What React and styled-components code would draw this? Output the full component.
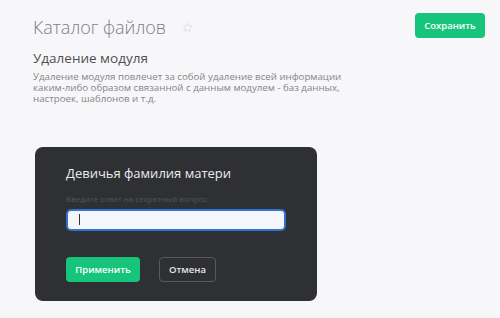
import React from "react";
import styled, { createGlobalStyle } from "styled-components";

const Global = createGlobalStyle`
  html, body { margin: 0; padding: 0; background: #f7f7f9; }
  body { font-family: "Open Sans", "Noto Sans", sans-serif; }
  * { box-sizing: border-box; }
`;

const Page = styled.div`
  width: 500px;
  height: 318px;
  padding: 13px 15px 0 33px;
  display: flex;
  flex-direction: column;
`;

const Header = styled.div`
  display: flex;
  align-items: flex-start;
  justify-content: space-between;
`;

const TitleRow = styled.div`
  display: flex;
  align-items: center;
  gap: 16px;
  padding-top: 2px;
`;

const Title = styled.h1`
  margin: 0;
  font-weight: 300;
  font-size: 18px;
  line-height: 24px;
  color: #7d7d80;
`;

const Star = styled.svg`
  width: 11px;
  height: 11px;
  margin-top: 1px;
`;

const Button = styled.button`
  height: 25px;
  border-radius: 4px;
  font-family: "Open Sans", sans-serif;
  font-size: 9.5px;
  font-weight: 600;
  cursor: pointer;
  padding: 0;
  background: ${p => (p.$variant === "ghost" ? "transparent" : "#16c47c")};
  color: ${p => (p.$variant === "ghost" ? "#e6e6e6" : "#ffffff")};
  border: ${p => (p.$variant === "ghost" ? "1px solid #595a5e" : "none")};
  width: ${p => p.$w}px;
`;

const SubTitle = styled.h2`
  margin: 10px 0 0;
  font-weight: 400;
  font-size: 13.5px;
  line-height: 18px;
  color: #4f4f52;
`;

const Text = styled.p`
  margin: 4px 0 0;
  width: 320px;
  font-size: 9.7px;
  line-height: 11.2px;
  color: #85858a;
`;

const Dialog = styled.div`
  margin: 42px 0 0 2px;
  width: 282px;
  height: 154px;
  background: #2f3034;
  border-radius: 8px;
  padding: 16px 31px 0 31px;
  display: flex;
  flex-direction: column;
`;

const DialogTitle = styled.h3`
  margin: 0;
  font-weight: 400;
  font-size: 13px;
  line-height: 20px;
  color: #ececee;
`;

const Hint = styled.div`
  margin-top: 11px;
  font-size: 8px;
  line-height: 10px;
  color: #525357;
`;

const Input = styled.div`
  margin-top: 5px;
  height: 22px;
  border: 2px solid #2f72cf;
  border-radius: 5px;
  background: #f5f6f9;
  display: flex;
  align-items: center;
  padding-left: 11px;
`;

const Caret = styled.span`
  width: 1px;
  height: 11px;
  background: #333;
`;

const Actions = styled.div`
  margin-top: 26px;
  display: flex;
  gap: 19px;
`;

export default function App() {
  return (
    <>
      <Global />
      <Page>
        <Header>
          <TitleRow>
            <Title>Каталог файлов</Title>
            <Star viewBox="0 0 24 24">
              <path
                d="M12 2.5l2.9 6.1 6.6.8-4.9 4.6 1.3 6.6L12 17.3l-5.9 3.3 1.3-6.6-4.9-4.6 6.6-.8z"
                fill="none"
                stroke="#d9d9dc"
                strokeWidth="1.6"
                strokeLinejoin="round"
              />
            </Star>
          </TitleRow>
          <Button $w={70}>Сохранить</Button>
        </Header>
        <SubTitle>Удаление модуля</SubTitle>
        <Text>
          Удаление модуля повлечет за собой удаление всей информации
          каким-либо образом связанной с данным модулем - баз данных,
          настроек, шаблонов и т.д.
        </Text>
        <Dialog>
          <DialogTitle>Девичья фамилия матери</DialogTitle>
          <Hint>Введите ответ на секретный вопрос</Hint>
          <Input>
            <Caret />
          </Input>
          <Actions>
            <Button $w={74}>Применить</Button>
            <Button $w={57} $variant="ghost">Отмена</Button>
          </Actions>
        </Dialog>
      </Page>
    </>
  );
}
